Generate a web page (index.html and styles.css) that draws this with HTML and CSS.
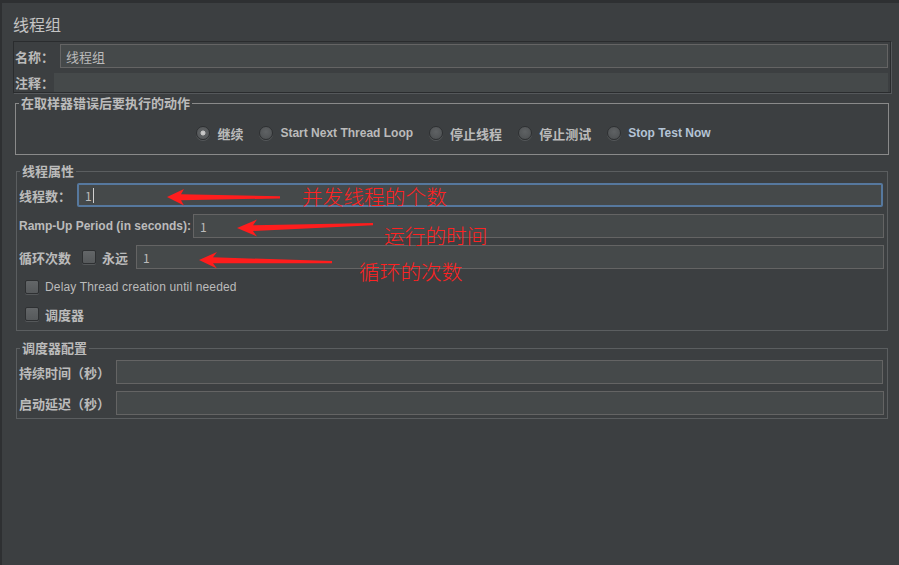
FILE: index.html
```html
<!DOCTYPE html>
<html lang="zh-CN">
<head>
<meta charset="utf-8">
<title>线程组</title>
<link rel="stylesheet" href="styles.css">
</head>
<body>
<div class="page">
  <h1 class="title">线程组</h1>

  <div class="namepanel">
    <div class="np-row np-name">
      <span class="np-label">名称：</span>
      <div class="field">线程组</div>
    </div>
    <div class="np-row np-comment">
      <span class="np-label np-label-c">注释：</span>
      <div class="area"></div>
    </div>
  </div>

  <fieldset class="group light">
    <legend>在取样器错误后要执行的动作</legend>
    <div class="radios">
      <label class="opt"><span class="radio on"></span><span class="cn">继续</span></label>
      <label class="opt"><span class="radio"></span><span class="en">Start Next Thread Loop</span></label>
      <label class="opt"><span class="radio"></span><span class="cn">停止线程</span></label>
      <label class="opt"><span class="radio"></span><span class="cn">停止测试</span></label>
      <label class="opt"><span class="radio"></span><span class="en hover">Stop Test Now</span></label>
    </div>
  </fieldset>

  <fieldset class="group etched">
    <legend>线程属性</legend>
    <div class="rows">
      <div class="frow">
        <span class="flabel cn w-threads">线程数：</span>
        <div class="field focus">1<span class="caret"></span></div>
      </div>
      <div class="frow">
        <span class="flabel en w-ramp">Ramp-Up Period (in seconds):</span>
        <div class="field">1</div>
      </div>
      <div class="frow">
        <span class="flabel cn w-loop">循环次数</span>
        <span class="check"></span>
        <span class="cn forever">永远</span>
        <div class="field">1</div>
      </div>
      <div class="crow">
        <span class="check"></span>
        <span class="en reg">Delay Thread creation until needed</span>
      </div>
      <div class="crow">
        <span class="check"></span>
        <span class="cn">调度器</span>
      </div>
    </div>
  </fieldset>

  <fieldset class="group etched">
    <legend>调度器配置</legend>
    <div class="rows rows-sched">
      <div class="frow">
        <span class="flabel cn w-sched">持续时间（秒）</span>
        <div class="field"></div>
      </div>
      <div class="frow">
        <span class="flabel cn w-sched">启动延迟（秒）</span>
        <div class="field"></div>
      </div>
    </div>
  </fieldset>

  <svg class="notes" width="899" height="565" viewBox="0 0 899 565" xmlns="http://www.w3.org/2000/svg">
    <path class="arrow" d="M167,197 L184,189 L181,194.3 L280,196.2 L280,198.4 L181,200.3 L184,205.5 Z"/>
    <path class="arrow" d="M237,228 L257,219.5 L253,225.2 L373,223 L373,225.2 L253,231 L257,236.5 Z"/>
    <path class="arrow" d="M199,260 L217,252 L213,257.3 L332,261 L332,263.2 L213,263.3 L217,268.5 Z"/>
    <text class="note" x="302" y="205">并发线程的个数</text>
    <text class="note" x="384" y="244">运行的时间</text>
    <text class="note" x="359" y="280">循环的次数</text>
  </svg>
</div>
</body>
</html>
```

FILE: styles.css
```css
* { box-sizing: border-box; }
html, body { margin: 0; padding: 0; }
body {
  background: #3c3f41;
  color: #bbbbbb;
  font-family: "Liberation Sans", "Noto Sans CJK SC", sans-serif;
  font-size: 12px;
}
.page {
  position: relative;
  width: 899px;
  height: 565px;
  overflow: hidden;
  border-top: 3px solid #2e3032;
  border-left: 2px solid #2e3032;
  padding: 11px 8px 0 11px;
}
.cn { font-family: "Noto Sans CJK SC", sans-serif; font-size: 13px; font-weight: 700; }
.en { font-family: "Liberation Sans", sans-serif; font-size: 12px; font-weight: 700; }
.en.reg { font-weight: 400; letter-spacing: 0.15px; }
.hover { color: #b4c4d6; }

.title {
  margin: 0 0 7px;
  font-family: "Noto Sans CJK SC", sans-serif;
  font-size: 16px;
  line-height: 20px;
  font-weight: 400;
  color: #c4c4c4;
}

/* name / comment panel */
.namepanel {
  border: 1px solid #2a2c2e;
  box-shadow: 1px 1px 0 #55585b;
  padding: 2px 2px 0 1px;
}
.np-row { display: flex; align-items: center; }
.np-name { height: 24px; }
.np-comment { height: 19px; margin-top: 5px; }
.np-label {
  font-family: "Noto Sans CJK SC", sans-serif;
  font-size: 13px;
  font-weight: 700;
  width: 45px;
  flex: none;
}
.np-label-c { width: 39px; }
.area { flex: 1; height: 100%; background: #45494a; }

.field {
  flex: 1;
  height: 24px;
  background: #45494a;
  border: 1px solid #646464;
  display: flex;
  align-items: center;
  padding-left: 6px;
  font-family: "Noto Sans CJK SC", sans-serif;
  font-size: 12px;
  color: #bbbbbb;
}
.namepanel .field { padding-left: 5px; font-size: 13px; }
.field.focus {
  border: 2px solid #56789e;
  border-radius: 2px;
  padding-left: 6px;
}
.caret {
  display: inline-block;
  width: 1px;
  height: 15px;
  background: #d0d0d0;
  margin-left: 1px;
}

/* titled groups */
.group {
  margin: 2px 2px 0 2px;
  padding: 0;
  min-width: 0;
}
.group legend {
  margin-left: 3px;
  padding: 0 2px;
  line-height: 16px;
  font-family: "Noto Sans CJK SC", sans-serif;
  font-size: 13px;
  font-weight: 700;
  color: #bbbbbb;
}
.group.light { border: 1px solid #8a8a8a; }
.group.etched {
  border: 1px solid #5b5e60;
  margin: 8px 3px 0 3px;
}
.group.etched + .group.etched { margin-top: 9px; }
.group.etched legend { margin-left: 3px; }

.radios {
  display: flex;
  justify-content: center;
  align-items: center;
  gap: 16px;
  height: 20px;
  margin: 12px 0 11px;
  padding-left: 3px;
}
.opt { display: flex; align-items: center; gap: 7px; }
.radio {
  width: 14px;
  height: 14px;
  border-radius: 50%;
  border: 1px solid #2e3032;
  background: radial-gradient(circle at 50% 40%, #5f6264 0%, #515456 70%, #4a4d4f 100%);
  box-shadow: 0 1px 0 #55585a;
  position: relative;
  flex: none;
}
.radio.on {
  background: radial-gradient(circle at 50% 50%, #cfcfcf 0, #bdbdbd 2.2px, #5b5e60 2.8px, #545759 100%);
}

.rows {
  padding: 4px 3px 3px 2px;
  display: flex;
  flex-direction: column;
  gap: 7px;
}
.rows-sched { padding-bottom: 3px; }
.frow { display: flex; align-items: center; height: 24px; }
.flabel { flex: none; }
.w-threads { width: 58px; }
.w-ramp { width: 174px; }
.w-loop { width: 63px; }
.w-sched { width: 97px; }
.forever { margin-left: 6px; width: 28px; margin-right: 6px; flex: none; }
.rows .frow:first-child .field { margin-right: 1px; }

.crow { display: flex; align-items: center; height: 22px; padding-left: 6px; gap: 6px; }
.crow + .crow { margin-top: -2px; margin-bottom: 2px; }
.check {
  width: 14px;
  height: 14px;
  flex: none;
  border: 1px solid #2e3032;
  border-radius: 2px;
  background: linear-gradient(#636668, #56595b);
  box-shadow: 0 1px 0 #55585a;
}

/* annotations drawn over the screenshot */
.notes {
  position: absolute;
  left: -2px;
  top: -3px;
  pointer-events: none;
}
.arrow { fill: #ff1d1d; }
.note {
  fill: #ff2222;
  font-family: "Noto Sans CJK SC", sans-serif;
  font-size: 20.7px;
  font-weight: 300;
}
```
